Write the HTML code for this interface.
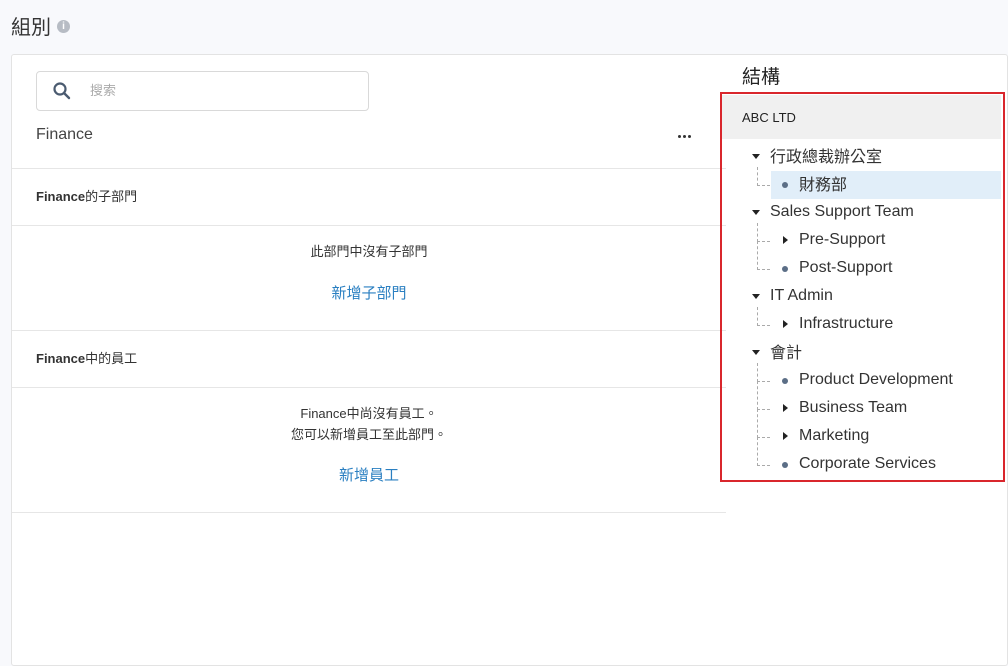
<!DOCTYPE html>
<html><head><meta charset="utf-8"><style>
body{margin:0;width:1008px;height:652px;background:#f8f9fc;font-family:"Liberation Sans","Noto Sans CJK TC",sans-serif;color:#333;position:relative;overflow:hidden}
.a{position:absolute}
.card{left:11px;top:54px;width:995px;height:610px;background:#fff;border:1px solid #e3e3e3;border-radius:3px}
.hr{position:absolute;left:12px;width:714px;height:1px;background:#e6e6e6}
.t{position:absolute;font-size:16px;line-height:20px;color:#333;white-space:nowrap}
.dash{position:absolute;border-left:1px dashed #aaa;border-bottom:1px dashed #aaa}
.tri{position:absolute;width:0;height:0}
.dn{border-left:4px solid transparent;border-right:4px solid transparent;border-top:5px solid #222}
.rt{border-top:4px solid transparent;border-bottom:4px solid transparent;border-left:5px solid #222}
.dot{position:absolute;width:6px;height:6px;border-radius:50%;background:#5b6e86}
.d3{position:absolute;width:3px;height:3px;border-radius:50%;background:#333;top:135px}
</style></head><body>
<div class="a" style="left:11px;top:15px;font-size:20px;line-height:26px;color:#333">組別</div>
<div class="a" style="left:57px;top:20px;width:13px;height:13px;border-radius:50%;background:#b7bcc4;color:#fff;font-size:10px;font-weight:bold;text-align:center;line-height:13px">i</div>
<div class="a card"></div>
<div class="a" style="left:36px;top:71px;width:331px;height:38px;border:1px solid #d9d9d9;border-radius:4px;background:#fff"></div>
<svg class="a" style="left:52px;top:81px" width="20" height="20" viewBox="0 0 20 20"><circle cx="8" cy="8" r="5.5" fill="none" stroke="#4b5b70" stroke-width="2.2"/><line x1="12" y1="12" x2="17" y2="17" stroke="#4b5b70" stroke-width="2.4" stroke-linecap="round"/></svg>
<div class="a" style="left:90px;top:82px;font-size:13px;line-height:17px;color:#aaa">搜索</div>
<div class="a" style="left:36px;top:126px;font-size:16px;line-height:18px;color:#444">Finance</div>
<div class="d3" style="left:678px"></div><div class="d3" style="left:683px"></div><div class="d3" style="left:688px"></div>
<div class="hr" style="top:168px"></div>
<div class="a" style="left:36px;top:188px;font-size:13px;line-height:17px;color:#333"><b>Finance</b>的子部門</div>
<div class="hr" style="top:225px"></div>
<div class="a" style="left:12px;width:714px;top:243px;text-align:center;font-size:13px;line-height:17px;color:#333">此部門中沒有子部門</div>
<div class="a" style="left:12px;width:714px;top:284px;text-align:center;font-size:15px;line-height:20px;color:#2a7fc1">新增子部門</div>
<div class="hr" style="top:330px"></div>
<div class="a" style="left:36px;top:350px;font-size:13px;line-height:17px;color:#333"><b>Finance</b>中的員工</div>
<div class="hr" style="top:387px"></div>
<div class="a" style="left:12px;width:714px;top:403px;text-align:center;font-size:13px;line-height:21px;color:#333">Finance中尚沒有員工。<br>您可以新增員工至此部門。</div>
<div class="a" style="left:12px;width:714px;top:466px;text-align:center;font-size:15px;line-height:20px;color:#2a7fc1">新增員工</div>
<div class="hr" style="top:512px"></div>

<div class="a" style="left:742px;top:65px;font-size:19px;line-height:25px;color:#222">結構</div>
<div class="a" style="left:720px;top:92px;width:281px;height:386px;border:2px solid #d9262c"></div>
<div class="a" style="left:722px;top:95px;width:279px;height:44px;background:#f0f0f0"></div>
<div class="a" style="left:742px;top:109px;font-size:13px;line-height:17px;color:#222">ABC LTD</div>
<div class="a" style="left:771px;top:171px;width:230px;height:28px;background:#e1eef9"></div>

<div class="tri dn" style="left:752px;top:154px"></div><div class="t" style="left:770px;top:148px">行政總裁辦公室</div>
<div class="dash" style="left:757px;top:167px;width:12px;height:18px"></div>
<div class="dot" style="left:782px;top:182px"></div><div class="t" style="left:799px;top:176px">財務部</div>

<div class="tri dn" style="left:752px;top:210px"></div><div class="t" style="left:770px;top:202px">Sales Support Team</div>
<div class="dash" style="left:757px;top:223px;width:12px;height:18px"></div>
<div class="dash" style="left:757px;top:241px;width:12px;height:28px;border-top:none"></div>
<div class="tri rt" style="left:783px;top:236px"></div><div class="t" style="left:799px;top:230px">Pre-Support</div>
<div class="dot" style="left:782px;top:266px"></div><div class="t" style="left:799px;top:258px">Post-Support</div>

<div class="tri dn" style="left:752px;top:294px"></div><div class="t" style="left:770px;top:286px">IT Admin</div>
<div class="dash" style="left:757px;top:307px;width:12px;height:18px"></div>
<div class="tri rt" style="left:783px;top:320px"></div><div class="t" style="left:799px;top:314px">Infrastructure</div>

<div class="tri dn" style="left:752px;top:350px"></div><div class="t" style="left:770px;top:344px">會計</div>
<div class="dash" style="left:757px;top:363px;width:12px;height:18px"></div>
<div class="dash" style="left:757px;top:381px;width:12px;height:28px;border-top:none"></div>
<div class="dash" style="left:757px;top:409px;width:12px;height:28px"></div>
<div class="dash" style="left:757px;top:437px;width:12px;height:28px"></div>
<div class="dot" style="left:782px;top:378px"></div><div class="t" style="left:799px;top:370px">Product Development</div>
<div class="tri rt" style="left:783px;top:404px"></div><div class="t" style="left:799px;top:398px">Business Team</div>
<div class="tri rt" style="left:783px;top:432px"></div><div class="t" style="left:799px;top:426px">Marketing</div>
<div class="dot" style="left:782px;top:462px"></div><div class="t" style="left:799px;top:454px">Corporate Services</div>
</body></html>
